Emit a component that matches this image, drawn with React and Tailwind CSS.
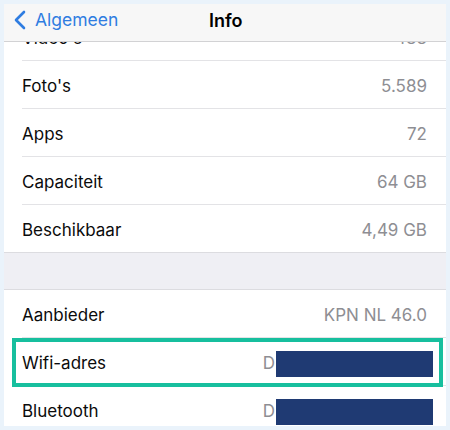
const font = { fontFamily: "Inter, 'Noto Sans', sans-serif" };

function Row({ label, value, last, masked }) {
  return (
    <div className={`h-[48px] shrink-0 pl-[18px] ${last ? "border-b border-[#dcdce0]" : ""}`}>
      <div className={`flex h-full items-center justify-between pr-[19px] pt-[5px] ${last ? "" : "border-b border-[#e3e3e6]"}`}>
        <span className="text-[17px] text-[#0b0b0b]">{label}</span>
        {masked ? (
          <span className="flex items-center text-[17px] text-[#8e8e93]">
            D<span className="-mr-[6px] ml-[1px] block h-[26px] w-[157px] bg-[#1f3a73]" />
          </span>
        ) : (
          <span className="text-[17px] text-[#8e8e93]">{value}</span>
        )}
      </div>
    </div>
  );
}

export default function App() {
  return (
    <div className="h-[430px] w-[450px] overflow-hidden bg-[#eaf3fb] p-[4px]" style={font}>
      <div className="relative flex h-full flex-col overflow-hidden bg-white">
        <div className="relative z-10 flex h-[38px] shrink-0 items-center border-b border-[#d2d2d4] bg-[#f7f7f7] pb-[5px]">
          <svg className="ml-[10px]" width="12" height="20" viewBox="0 0 12 20">
            <polyline points="10,2 2,10 10,18" fill="none" stroke="#2f7de1" strokeWidth="2.6" strokeLinecap="round" strokeLinejoin="round" />
          </svg>
          <span className="ml-[9px] text-[17.5px] text-[#2f7de1]">Algemeen</span>
          <span className="absolute left-[205px] text-[18px] font-semibold text-black">Info</span>
        </div>
        <div className="-mt-[29px] flex flex-col">
          <Row label="Video's" value="488" />
          <Row label="Foto's" value="5.589" />
          <Row label="Apps" value="72" />
          <Row label="Capaciteit" value="64 GB" />
          <Row label="Beschikbaar" value="4,49 GB" last />
          <div className="h-[37px] shrink-0 border-b border-[#dcdce0] bg-[#efeff4]" />
          <Row label="Aanbieder" value="KPN NL 46.0" />
          <Row label="Wifi-adres" masked />
          <Row label="Bluetooth" masked />
        </div>
        <div className="absolute left-[8px] top-[334px] h-[49px] w-[431px] border-4 border-[#17bf9e]" />
      </div>
    </div>
  );
}
